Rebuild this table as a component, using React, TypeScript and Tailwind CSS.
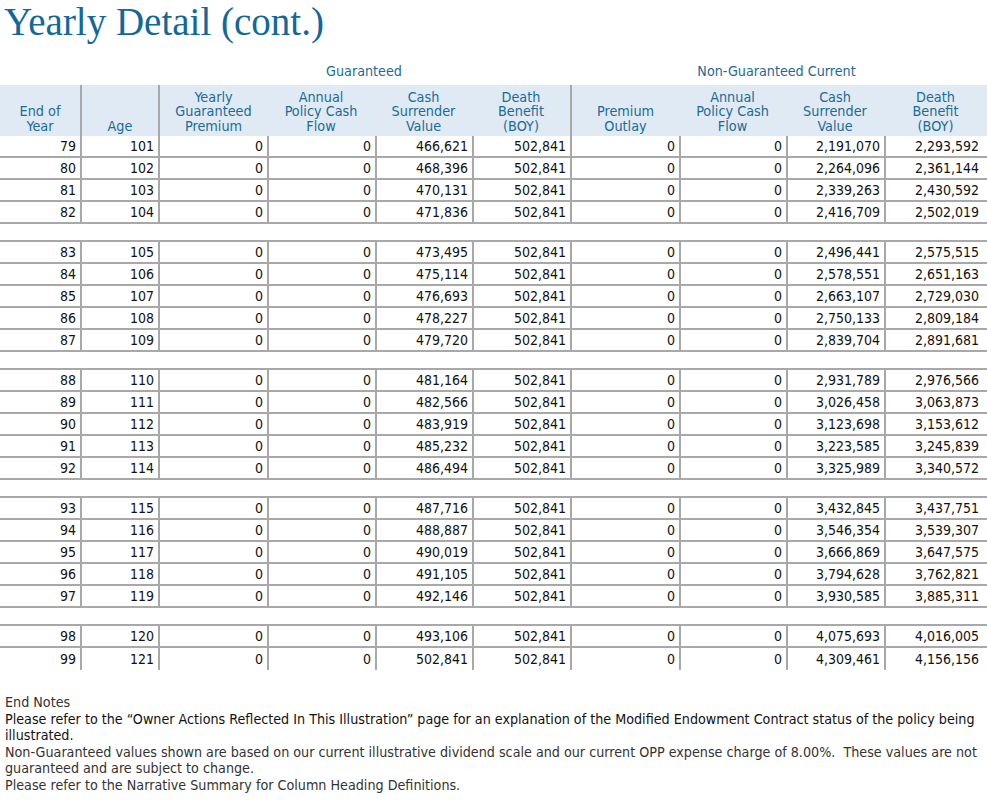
import React from "react";

const FONT = { fontFamily: '"DejaVu Sans Condensed", "DejaVu Sans", sans-serif' };

const GROUPS: string[][][] = [
  [
    ["79", "101", "466,621", "2,191,070", "2,293,592"],
    ["80", "102", "468,396", "2,264,096", "2,361,144"],
    ["81", "103", "470,131", "2,339,263", "2,430,592"],
    ["82", "104", "471,836", "2,416,709", "2,502,019"],
  ],
  [
    ["83", "105", "473,495", "2,496,441", "2,575,515"],
    ["84", "106", "475,114", "2,578,551", "2,651,163"],
    ["85", "107", "476,693", "2,663,107", "2,729,030"],
    ["86", "108", "478,227", "2,750,133", "2,809,184"],
    ["87", "109", "479,720", "2,839,704", "2,891,681"],
  ],
  [
    ["88", "110", "481,164", "2,931,789", "2,976,566"],
    ["89", "111", "482,566", "3,026,458", "3,063,873"],
    ["90", "112", "483,919", "3,123,698", "3,153,612"],
    ["91", "113", "485,232", "3,223,585", "3,245,839"],
    ["92", "114", "486,494", "3,325,989", "3,340,572"],
  ],
  [
    ["93", "115", "487,716", "3,432,845", "3,437,751"],
    ["94", "116", "488,887", "3,546,354", "3,539,307"],
    ["95", "117", "490,019", "3,666,869", "3,647,575"],
    ["96", "118", "491,105", "3,794,628", "3,762,821"],
    ["97", "119", "492,146", "3,930,585", "3,885,311"],
  ],
  [
    ["98", "120", "493,106", "4,075,693", "4,016,005"],
    ["99", "121", "502,841", "4,309,461", "4,156,156"],
  ],
];

const HEADERS = [
  ["End of", "Year"],
  ["Age"],
  ["Yearly", "Guaranteed", "Premium"],
  ["Annual", "Policy Cash", "Flow"],
  ["Cash", "Surrender", "Value"],
  ["Death", "Benefit", "(BOY)"],
  ["Premium", "Outlay"],
  ["Annual", "Policy Cash", "Flow"],
  ["Cash", "Surrender", "Value"],
  ["Death", "Benefit", "(BOY)"],
];

const COLS = "grid grid-cols-[80px_78px_109px_108px_97px_98px_109px_107px_98px_103px]";

export default function App() {
  return (
    <div className="w-[987px] h-[800px] bg-white overflow-hidden text-[#222]" style={FONT}>
      <h1
        className="pl-[4px] pt-[1px] h-[58px] text-[39px] leading-[42px] text-[#13679a]"
        style={{ fontFamily: '"Liberation Serif", serif' }}
      >
        Yearly Detail (cont.)
      </h1>

      {/* group headings */}
      <div className="flex h-[27px] items-center text-[14.2px] text-[#1c6a96]">
        <div className="w-[158px]" />
        <div className="w-[412px] text-center">Guaranteed</div>
        <div className="w-[417px] text-center pr-[4px]">Non-Guaranteed Current</div>
      </div>

      {/* column headings */}
      <div className={`${COLS} h-[51px] bg-[#dfeaf4] text-[14.3px] leading-[14.5px] text-[#1c6a96]`}>
        {HEADERS.map((h, i) => (
          <div
            key={i}
            className={`flex flex-col justify-end items-center text-center pb-[3px] ${
              i === 1 || i === 2 || i === 6 ? "border-l-2 border-[#a8a8a8]" : ""
            }`}
          >
            {h.map((l) => (
              <div key={l} className="whitespace-nowrap">{l}</div>
            ))}
          </div>
        ))}
      </div>

      {/* body */}
      <div className="text-[14px] text-[#111]">
        {GROUPS.map((g, gi) => (
          <div key={gi}>
            {g.map((r, ri) => {
              const last = gi === GROUPS.length - 1 && ri === g.length - 1;
              const cells = [r[0], r[1], "0", "0", r[2], "502,841", "0", "0", r[3], r[4]];
              return (
                <div
                  key={r[0]}
                  className={`${COLS} h-[22px] ${last ? "" : "border-b-2 border-[#a8a8a8]"}`}
                >
                  {cells.map((c, ci) => (
                    <div
                      key={ci}
                      className={`flex items-end justify-end pr-[4px] ${
                        ci > 0 ? "border-l-2 border-[#a8a8a8]" : ""
                      } ${ci === 9 ? "pr-[8px]" : ""}`}
                    >
                      {c}
                    </div>
                  ))}
                </div>
              );
            })}
            {gi < GROUPS.length - 1 && <div className="h-[18px] border-b-2 border-[#a8a8a8]" />}
          </div>
        ))}
      </div>

      {/* end notes */}
      <div className="pl-[5px] mt-[24px] text-[14.2px] leading-[16px] text-[#333]">
        <div className="mb-[1px]">End Notes</div>
        <p className="text-[#111] mb-[1px]">
          Please refer to the “Owner Actions Reflected In This Illustration” page for an explanation of the Modified
          Endowment Contract status of the policy being illustrated.
        </p>
        <p className="mb-[1px]">
          Non-Guaranteed values shown are based on our current illustrative dividend scale and our current OPP expense
          charge of 8.00%.&nbsp; These values are not guaranteed and are subject to change.
        </p>
        <p>Please refer to the Narrative Summary for Column Heading Definitions.</p>
      </div>
    </div>
  );
}
